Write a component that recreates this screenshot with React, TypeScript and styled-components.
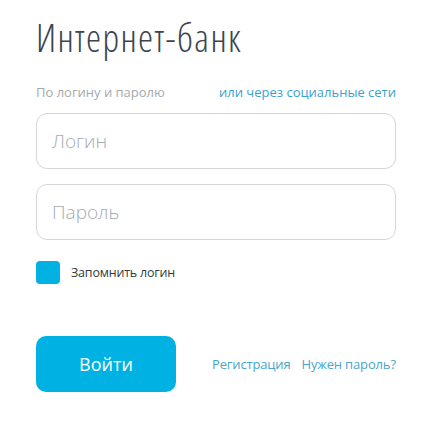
import React from "react";
import styled, { createGlobalStyle } from "styled-components";

const Global = createGlobalStyle`
  html, body { margin: 0; padding: 0; background: #ffffff; }
  body { font-family: "Open Sans", "Noto Sans", sans-serif; }
`;

const Page = styled.div`
  width: 434px;
  height: 424px;
  box-sizing: border-box;
  padding: 14px 38px 0 36px;
  background: #fff;
`;

const Title = styled.h1`
  margin: 0;
  font-family: "Open Sans", sans-serif;
  font-weight: 300;
  font-stretch: 80%;
  font-size: 38px;
  line-height: 46px;
  letter-spacing: 1.4px;
  color: #3b4550;
`;

const Tabs = styled.div`
  display: flex;
  justify-content: space-between;
  align-items: baseline;
  margin-top: 23px;
  font-size: 13px;
  line-height: 18px;
`;

const Tab = styled.span<{ $active?: boolean }>`
  color: ${(p) => (p.$active ? "#a4aaaf" : "#3aa2cc")};
`;

const Field = styled.div<{ $mt: number }>`
  margin-top: ${(p) => p.$mt}px;
  height: 56px;
  box-sizing: border-box;
  border: 1px solid #d6d6d6;
  border-radius: 11px;
  display: flex;
  align-items: center;
  padding-left: 15px;
  font-size: 19px;
  font-weight: 300;
  color: #a4acb4;
`;

const Remember = styled.label`
  display: flex;
  align-items: center;
  gap: 11px;
  margin-top: 21px;
  font-size: 12.5px;
  letter-spacing: -0.2px;
  color: #333a40;
`;

const Box = styled.span`
  width: 24px;
  height: 23px;
  border-radius: 4px;
  background: #00b1e1;
`;

const Actions = styled.div`
  display: flex;
  align-items: center;
  margin-top: 52px;
`;

const Button = styled.button`
  flex: none;
  width: 140px;
  height: 56px;
  border: none;
  border-radius: 10px;
  background: #00b2e3;
  color: #fff;
  font-family: "Open Sans", sans-serif;
  font-size: 18px;
  padding: 0;
`;

const Links = styled.div`
  display: flex;
  gap: 11px;
  margin-left: 36px;
  white-space: nowrap;
  font-size: 13px;
  letter-spacing: -0.15px;
`;

const Link = styled.a`
  color: #4aa5cc;
  text-decoration: none;
`;

export default function App() {
  return (
    <Page>
      <Global />
      <Title>Интернет-банк</Title>
      <Tabs>
        <Tab $active>По логину и паролю</Tab>
        <Tab>или через социальные сети</Tab>
      </Tabs>
      <Field $mt={12}>Логин</Field>
      <Field $mt={15}>Пароль</Field>
      <Remember>
        <Box />
        Запомнить логин
      </Remember>
      <Actions>
        <Button>Войти</Button>
        <Links>
          <Link>Регистрация</Link>
          <Link>Нужен пароль?</Link>
        </Links>
      </Actions>
    </Page>
  );
}
